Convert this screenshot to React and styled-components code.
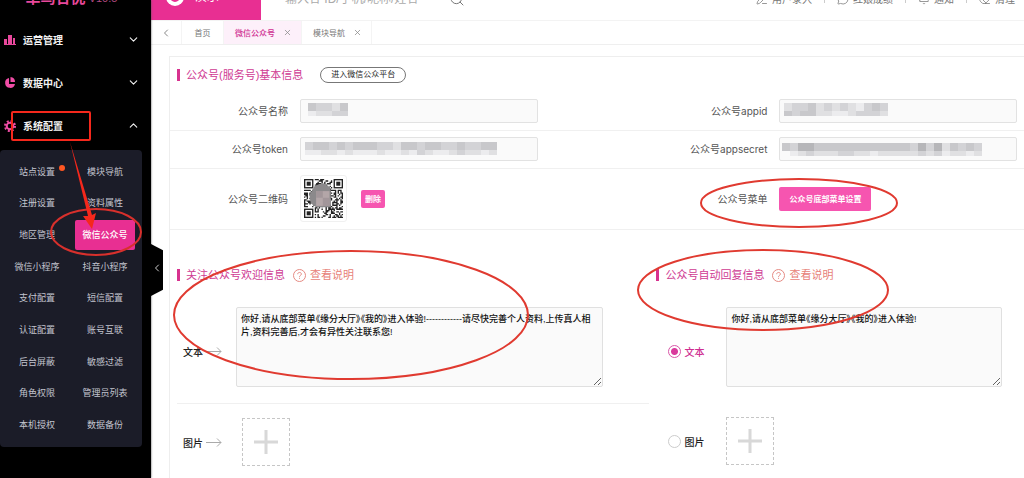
import React from "react";
import styled, { createGlobalStyle, css } from "styled-components";
import {
  ChevronDown,
  ChevronUp,
  ChevronLeft,
  X,
  Search,
  PenLine,
  MessageCircle,
  Bell,
  Eraser,
} from "lucide-react";

const sans = `"Liberation Sans", "Noto Sans CJK SC", sans-serif`;

const GlobalStyle = createGlobalStyle`
  * { box-sizing: border-box; }
  body { margin: 0; background: #fff; font-family: ${sans}; overflow: hidden; }
  button, input, textarea { font-family: inherit; margin: 0; }
  a { text-decoration: none; color: inherit; }
  svg { display: block; flex: none; }
`;

const Page = styled.div`
  position: relative;
  display: flex;
  min-height: 100vh;
`;

/* ---------- sidebar ---------- */
const Sidebar = styled.aside`
  position: relative;
  flex: none;
  width: 151px;
  background: #000;
  box-shadow: 0 0 2px #555;
`;
const Brand = styled.div`
  height: 18px;
  display: flex;
  align-items: flex-end;
  justify-content: center;
  padding-right: 8px;
  gap: 3px;
  color: #e8489c;
  font-size: 15px;
  font-weight: 700;
  line-height: 40px;
  small {
    font-size: 11px;
    font-weight: 400;
    color: #b04a80;
  }
`;
const MenuHead = styled.button`
  display: flex;
  align-items: center;
  width: 100%;
  height: 43px;
  padding: 0 11px 0 4px;
  border: 0;
  background: none;
  color: #f2f2f2;
  font-size: 10px;
  font-weight: 700;
  text-align: left;
  svg:first-child { width: 12px; margin-right: 7px; }
  span { flex: 1; }
`;
const SubMenu = styled.nav`
  display: grid;
  grid-template-columns: 1fr 1fr;
  grid-template-rows: repeat(9, 1fr);
  align-items: center;
  height: 297px;
  margin: 3px 9px 0 0;
  padding: 6px 3px;
  border-radius: 4px;
  background: #1b1c28;
`;
const SubLink = styled.a`
  position: relative;
  justify-self: center;
  width: 60px;
  line-height: 30px;
  font-size: 9px;
  text-align: center;
  color: #c3c5cf;
  ${(p) =>
    p.$active &&
    css`
      background: #e82f92;
      color: #fff;
      font-weight: 500;
      border-radius: 2px;
    `}
`;
const Dot = styled.i`
  position: absolute;
  top: 8px;
  right: 2px;
  width: 6px;
  height: 6px;
  border-radius: 50%;
  background: #ff5722;
`;
const Collapse = styled.button`
  position: absolute;
  left: 100%;
  top: 244px;
  width: 12px;
  height: 52px;
  padding: 0 0 4px;
  border: 0;
  background: #000;
  color: #ccc;
  clip-path: polygon(0 0, 100% 12%, 100% 88%, 0 100%);
`;

/* ---------- header ---------- */
const Main = styled.main`
  flex: 1;
  min-width: 0;
`;
const Header = styled.header`
  display: flex;
  align-items: flex-end;
  height: 20px;
  color: #777;
`;
const UserBlock = styled.div`
  display: flex;
  align-items: center;
  flex: none;
  gap: 11px;
  width: 110px;
  height: 46px;
  padding-left: 15px;
  background: #e82f92;
  color: #fff;
  font-size: 12px;
  line-height: 14px;
`;
const SearchForm = styled.form`
  display: flex;
  align-items: center;
  flex: 1;
  height: 43px;
  padding-left: 24px;
  input {
    width: 164px;
    padding: 0;
    border: 0;
    outline: 0;
    font-size: 12px;
    background: none;
  }
  input::placeholder { color: #aaa; }
  button {
    padding: 0;
    border: 0;
    background: none;
    color: #777;
  }
`;
const Tools = styled.div`
  display: flex;
  align-items: center;
  height: 43px;
  padding-right: 9px;
  font-size: 10px;
`;
const Tool = styled.a`
  display: flex;
  align-items: center;
  gap: 4px;
  & + & {
    margin-left: 12px;
  }
  & + &::before {
    content: "";
    width: 1px;
    height: 9px;
    margin-right: 8px;
    background: #ccc;
  }
`;

/* ---------- tabs ---------- */
const Tabs = styled.div`
  display: flex;
  height: 25px;
  border-top: 1px solid #f3f3f3;
  border-bottom: 1px solid #efefef;
  color: #777;
  font-size: 8px;
`;
const Tab = styled.div`
  display: flex;
  align-items: center;
  gap: 8px;
  padding: 0 9px 0 11px;
  border-right: 1px solid #f4f4f4;
  ${(p) =>
    p.$active &&
    css`
      background: #fdf0fa;
      color: #cf2f92;
      font-weight: 500;
    `}
  ${(p) =>
    p.$width &&
    css`
      justify-content: center;
      width: ${p.$width}px;
      padding: 0;
    `}
  button {
    padding: 0;
    border: 0;
    background: none;
    color: #888;
  }
`;

/* ---------- panel ---------- */
const Panel = styled.section`
  margin: 11px 0 0 18px;
  border: solid #eee;
  border-width: 1px 0 0 1px;
  min-height: calc(100vh - 56px);
`;
const TitleRow = styled.div`
  display: flex;
  align-items: center;
  height: 36px;
  padding-left: 7px;
`;
const Title = styled.h2`
  margin: 0;
  padding-left: 6px;
  border-left: 3px solid #d8328f;
  color: #cf3b93;
  font-size: 11px;
  line-height: 12px;
  font-weight: 400;
  white-space: nowrap;
`;
const Pill = styled.button`
  margin-left: 17px;
  width: 86px;
  height: 16px;
  padding: 0;
  border: 1px solid #777;
  border-radius: 8px;
  background: #fff;
  color: #222;
  font-size: 8px;
  line-height: 12px;
`;
const FormRow = styled.div`
  display: grid;
  grid-template-columns: 32fr 25fr;
  align-items: center;
  padding: 6px 0 7px;
  border-bottom: 1px solid #f0f0f0;
`;
const Field = styled.div`
  display: flex;
  align-items: center;
`;
const labelStyle = css`
  flex: none;
  width: 118px;
  margin-right: 12px;
  color: #555;
  font: 10px/16px Inter, "Noto Sans CJK SC", sans-serif;
  text-align: right;
`;
const Label = styled.label`
  ${labelStyle}
`;
const Caption = styled.span`
  ${labelStyle}
`;
const InputWrap = styled.div`
  position: relative;
  flex: 1;
  max-width: 238px;
  margin-right: 6px;
  input {
    display: block;
    width: 100%;
    height: 24px;
    border: 1px solid #e2e2e2;
    border-radius: 2px;
    background: #fafafa;
  }
  svg {
    position: absolute;
    left: 0;
    top: 0;
    pointer-events: none;
  }
`;
const QrBox = styled.div`
  padding: 3px;
  border: 1px solid #f0f0f0;
  border-radius: 3px;
`;
const PinkButton = styled.button`
  height: ${(p) => (p.$small ? 18 : 24)}px;
  margin-left: ${(p) => (p.$small ? 14 : 0)}px;
  padding: 0 ${(p) => (p.$small ? 4 : 10)}px;
  border: 0;
  border-radius: 2px;
  background: #f655b0;
  color: #fff;
  font-size: 8px;
  font-weight: 700;
`;
const Replies = styled.div`
  display: grid;
  grid-template-columns: 32fr 25fr;
  padding-top: 27px;
`;
const HelpLink = styled.a`
  display: flex;
  align-items: center;
  gap: 4px;
  margin-left: 8px;
  color: #e77f78;
  font-size: 11px;
  line-height: 16px;
`;
const MediaRow = styled.div`
  display: flex;
  align-items: center;
  padding-top: ${(p) => (p.$spaced ? 30 : 14)}px;
  ${(p) =>
    p.$ruled &&
    css`
      margin-left: 7px;
      padding-bottom: 16px;
      border-bottom: 1px solid #f0f0f0;
    `}
`;
const MediaLabel = styled.label`
  display: flex;
  align-items: center;
  flex: none;
  gap: 3px;
  width: ${(p) => p.$width}px;
  padding-left: ${(p) => p.$indent}px;
  padding-top: ${(p) => (p.$low ? 8 : 0)}px;
  color: ${(p) => (p.$pink ? "#cf2f92" : "#222")};
  font-size: 10px;
  font-weight: 500;
`;
const Radio = styled.input`
  appearance: none;
  width: 13px;
  height: 13px;
  border: 1px solid #ccc;
  border-radius: 50%;
  background: #fff;
  &:checked {
    border-color: #d957a8;
    background: radial-gradient(circle, #d93a9c 3px, #fff 4px);
  }
`;
const TextArea = styled.textarea`
  flex: 1;
  min-width: 0;
  height: 80px;
  margin-right: ${(p) => p.$end}px;
  padding: 5px 4px;
  border: 1px solid #e0e0e0;
  border-radius: 2px;
  background: #fafafa;
  color: #111;
  font-size: 9px;
  line-height: 13px;
  font-weight: 500;
  font-feature-settings: "palt";
`;
const AddBox = styled.button`
  display: grid;
  place-items: center;
  width: 48px;
  height: 48px;
  padding: 0;
  border: 1px dashed #c6c6c6;
  background: #fff;
`;
const Marks = styled.svg`
  position: absolute;
  left: 0;
  top: 0;
  pointer-events: none;
  overflow: visible;
`;

/* ---------- drawings ---------- */
const BarsIcon = () => (
  <svg width="12" height="10" viewBox="0 0 12 10" fill="#e8489c">
    <path d="M0 4h3v5H0zM4 0h4v9H4zM9 3h2v6H9zM0 9h12v1H0z" />
  </svg>
);
const PieIcon = () => (
  <svg width="12" height="12" viewBox="0 0 12 12" fill="#f04da6">
    <path d="M5 1v6h6A5 5 0 1 1 5 1z" />
    <path d="M6.500 0A5 5 0 0 1 11 5H6.500z" />
  </svg>
);
const GearIcon = () => (
  <svg width="12" height="12" viewBox="0 0 12 12" fill="none" stroke="#f04da6">
    <circle cx="6" cy="6" r="3.300" strokeWidth="2" />
    <circle cx="6" cy="6" r="5" strokeWidth="2" strokeDasharray="2 1.930" />
  </svg>
);
const AvatarIcon = () => (
  <svg width="18" height="18" viewBox="0 0 18 18">
    <circle cx="9" cy="9" r="9" fill="#fff" />
    <circle cx="9" cy="9" r="4" fill="none" stroke="#e82f92" strokeWidth="2" />
  </svg>
);
const HelpIcon = () => (
  <svg width="13" height="13" viewBox="0 0 13 13" fill="none" stroke="#e58a83">
    <circle cx="6.500" cy="6.500" r="6" />
    <path d="M4.700 5.200c0-2.400 3.700-2.300 3.700-.1 0 1.300-1.900 1.300-1.900 2.700M6.500 8.800v1" />
  </svg>
);
const ArrowIcon = () => (
  <svg width="16" height="9" viewBox="0 0 16 9" fill="none" stroke="#aaa">
    <path d="M0 4.500h15M11 .5l4 4-4 4" />
  </svg>
);
const PlusIcon = () => (
  <svg width="24" height="24" viewBox="0 0 24 24" stroke="#d8d8d8" strokeWidth="3">
    <path d="M12 0v24M0 12h24" />
  </svg>
);

const shades = { a: "#ececee", b: "#e0e0e2", c: "#d3d3d6", d: "#c8c8cb", e: "#b6b6b9" };
const Mosaic = ({ rows, x, y }) => (
  <svg width="237" height="24" shapeRendering="crispEdges">
    {rows.map((row, r) =>
      [...row].map((c, i) =>
        c === " " ? null : (
          <rect
            key={`${r}-${i}`}
            x={x + i * 8}
            y={y + r * 8}
            width="8"
            height={r ? 5 : 8}
            fill={shades[c]}
          />
        )
      )
    )}
  </svg>
);

const N = 29;
const inFinder = (x, y) =>
  (x < 8 && y < 8) || (x > N - 9 && y < 8) || (x < 8 && y > N - 9);
const qrCells = (() => {
  let seed = 77;
  let d = "";
  for (let y = 0; y < N; y++)
    for (let x = 0; x < N; x++) {
      seed = (seed * 1103515245 + 12345) % 2147483648;
      if (!inFinder(x, y) && seed / 2147483648 > 0.48) d += `M${x} ${y}h1v1h-1z`;
    }
  return d;
})();
const QrCode = () => (
  <svg width="39" height="39" viewBox="0 0 29 29" role="img" aria-label="二维码">
    <path d={qrCells} fill="#222" />
    {[[0, 0], [22, 0], [0, 22]].map(([x, y]) => (
      <g key={`${x}-${y}`}>
        <rect x={x + 0.5} y={y + 0.5} width="6" height="6" fill="none" stroke="#222" />
        <rect x={x + 2} y={y + 2} width="3" height="3" fill="#222" />
      </g>
    ))}
    <path d="M8 5l6-2 5 3 1 3v12H9L5 18l-1-6z" fill="#8b898b" />
    <path d="M9 9h10v11H9z" fill="#b3a6a8" />
    <path d="M9 9h5v5H9zM14 14h5v6h-5z" fill="#a2969a" />
  </svg>
);

const subItems = [
  "站点设置", "模块导航", "注册设置", "资料属性", "地区管理", "微信公众号",
  "微信小程序", "抖音小程序", "支付配置", "短信配置", "认证配置", "账号互联",
  "后台屏蔽", "敏感过滤", "角色权限", "管理员列表", "本机授权", "数据备份",
];

const TextField = ({ id, label, ...mosaic }) => (
  <Field>
    <Label htmlFor={id}>{label}</Label>
    <InputWrap>
      <input id={id} type="text" />
      <Mosaic {...mosaic} />
    </InputWrap>
  </Field>
);

const SectionTitle = ({ children }) => (
  <TitleRow>
    <Title>{children}</Title>
    <HelpLink href="#help">
      <HelpIcon />
      查看说明
    </HelpLink>
  </TitleRow>
);

const greeting = "你好,请从底部菜单《缘分大厅》《我的》进入体验!";

export default function App() {
  return (
    <Page>
      <GlobalStyle />
      <Sidebar>
        <Brand>
          草鸟合优<small>V10.5</small>
        </Brand>
        <MenuHead><BarsIcon /><span>运营管理</span><ChevronDown size={13} /></MenuHead>
        <MenuHead><PieIcon /><span>数据中心</span><ChevronDown size={13} /></MenuHead>
        <MenuHead><GearIcon /><span>系统配置</span><ChevronUp size={13} /></MenuHead>
        <SubMenu>
          {subItems.map((t) => (
            <SubLink key={t} href="#menu" $active={t === "微信公众号"}>
              {t}
              {t === "站点设置" && <Dot />}
            </SubLink>
          ))}
        </SubMenu>
        <Collapse aria-label="收起"><ChevronLeft size={12} /></Collapse>
      </Sidebar>

      <Main>
        <Header>
          <UserBlock><AvatarIcon /><span>演示</span></UserBlock>
          <SearchForm>
            <input aria-label="搜索" placeholder="输入各 ID/手机/昵称/姓名" />
            <button type="button" aria-label="搜索"><Search size={16} strokeWidth={1.5} /></button>
          </SearchForm>
          <Tools>
            <Tool href="#add"><PenLine size={12} strokeWidth={1.5} />用户录入</Tool>
            <Tool href="#log"><MessageCircle size={12} strokeWidth={1.5} />红娘成绩</Tool>
            <Tool href="#notice"><Bell size={12} strokeWidth={1.5} />通知</Tool>
            <Tool href="#clear"><Eraser size={12} strokeWidth={1.5} />清理</Tool>
          </Tools>
        </Header>
        <Tabs>
          <Tab $width={31}>
            <button aria-label="上一页"><ChevronLeft size={12} strokeWidth={2} /></button>
          </Tab>
          <Tab $width={42}>首页</Tab>
          <Tab $active>微信公众号<button aria-label="关闭"><X size={9} strokeWidth={2} /></button></Tab>
          <Tab>模块导航<button aria-label="关闭"><X size={9} strokeWidth={2} /></button></Tab>
        </Tabs>

        <Panel>
          <TitleRow>
            <Title>公众号(服务号)基本信息</Title>
            <Pill>进入微信公众平台</Pill>
          </TitleRow>
          <FormRow>
            <TextField id="name" label="公众号名称" x={8} y={4} rows={["dccbd", "abbcc"]} />
            <TextField id="appid" label="公众号appid" x={5} y={4} rows={["bccdbcbcbacdc", "dcddbbaabcccb"]} />
          </FormRow>
          <FormRow>
            <TextField id="token" label="公众号token" x={5} y={5} rows={["cddcdcdddccbddcddccdccdd", "aabbabaaabaabacbaabcbbab"]} />
            <TextField id="secret" label="公众号appsecret" x={3} y={6} rows={["dceeddddddddddddcecebdcdc", " abcbbbccbbabbbbbcbcabbab"]} />
          </FormRow>
          <FormRow>
            <Field>
              <Caption>公众号二维码</Caption>
              <QrBox><QrCode /></QrBox>
              <PinkButton $small>删除</PinkButton>
            </Field>
            <Field>
              <Caption>公众号菜单</Caption>
              <PinkButton>公众号底部菜单设置</PinkButton>
            </Field>
          </FormRow>

          <Replies>
            <div>
              <SectionTitle>关注公众号欢迎信息</SectionTitle>
              <MediaRow $ruled>
                <MediaLabel htmlFor="welcome" $width={59} $indent={6} $low>
                  文本<ArrowIcon />
                </MediaLabel>
                <TextArea
                  id="welcome"
                  $end={46}
                  defaultValue={`${greeting}------------请尽快完善个人资料,上传真人相片,资料完善后,才会有异性关注联系您!`}
                />
              </MediaRow>
              <MediaRow>
                <MediaLabel as="span" $width={72} $indent={13}>
                  图片<ArrowIcon />
                </MediaLabel>
                <AddBox aria-label="添加图片"><PlusIcon /></AddBox>
              </MediaRow>
            </div>
            <div>
              <SectionTitle>公众号自动回复信息</SectionTitle>
              <MediaRow>
                <MediaLabel $width={77} $indent={19} $pink $low>
                  <Radio type="radio" name="reply" defaultChecked />文本
                </MediaLabel>
                <TextArea aria-label="自动回复文本" $end={22} defaultValue={greeting} />
              </MediaRow>
              <MediaRow $spaced>
                <MediaLabel $width={77} $indent={19}>
                  <Radio type="radio" name="reply" />图片
                </MediaLabel>
                <AddBox aria-label="添加图片"><PlusIcon /></AddBox>
              </MediaRow>
            </div>
          </Replies>
        </Panel>
      </Main>

      <Marks width="1024" height="478" fill="none" stroke="#e03a30" strokeWidth="2" aria-hidden="true">
        <rect x="12" y="112" width="78" height="28" rx="1" strokeWidth="2" stroke="#f5281c" />
        <ellipse cx="96" cy="232" rx="45" ry="23" stroke="#d8302c" />
        <ellipse cx="799" cy="203" rx="98" ry="24" />
        <ellipse cx="351" cy="315" rx="177" ry="64" />
        <ellipse cx="763" cy="290" rx="125" ry="40" />
        <path d="M70 142L88 216L83 216L92 229L96 213L92 215Z" fill="#f5281c" stroke="none" />
      </Marks>
    </Page>
  );
}
